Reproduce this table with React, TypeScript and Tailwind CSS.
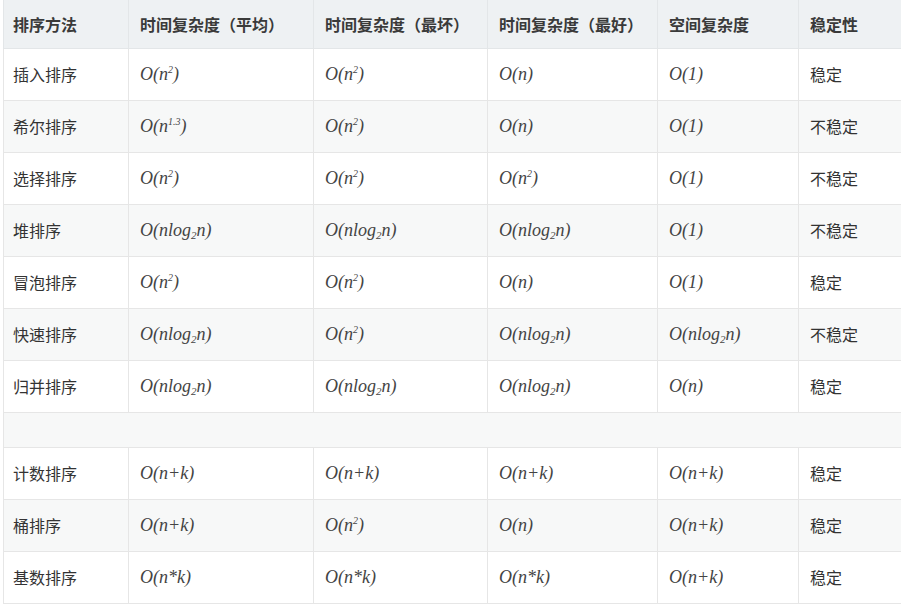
import React from 'react';

type Cell = React.ReactNode;

const cjk = '"Noto Sans CJK SC", "Noto Sans", sans-serif';

function F({ children }: { children: React.ReactNode }) {
  return (
    <span className="italic text-[18px] text-[#444]" style={{ fontFamily: '"Liberation Serif", serif' }}>
      {children}
    </span>
  );
}

const Sup = ({ t }: { t: string }) => <sup className="text-[10px] relative -top-[7px]">{t}</sup>;

const sq = <F>O(n<Sup t="2" />)</F>;
const n = <F>O(n)</F>;
const one = <F>O(1)</F>;
const nlog = <F>O(nlog<sub className="text-[11px] relative top-[3px]">2</sub>n)</F>;
const nk = <F>O(n+k)</F>;
const nmk = <F>O(n*k)</F>;

const headers = ['排序方法', '时间复杂度（平均）', '时间复杂度（最坏）', '时间复杂度（最好）', '空间复杂度', '稳定性'];

const rows: (Cell[] | null)[] = [
  ['插入排序', sq, sq, n, one, '稳定'],
  ['希尔排序', <F>O(n<Sup t="1.3" />)</F>, sq, n, one, '不稳定'],
  ['选择排序', sq, sq, sq, one, '不稳定'],
  ['堆排序', nlog, nlog, nlog, one, '不稳定'],
  ['冒泡排序', sq, sq, n, one, '稳定'],
  ['快速排序', nlog, sq, nlog, nlog, '不稳定'],
  ['归并排序', nlog, nlog, nlog, n, '稳定'],
  null,
  ['计数排序', nk, nk, nk, nk, '稳定'],
  ['桶排序', nk, sq, n, nk, '稳定'],
  ['基数排序', nmk, nmk, nmk, nk, '稳定'],
];

const widths = ['w-[125px]', 'w-[185px]', 'w-[174px]', 'w-[170px]', 'w-[141px]', 'w-[102px]'];

export default function App() {
  return (
    <div className="w-[922px] h-[610px] bg-white overflow-hidden pl-[3px]" style={{ fontFamily: cjk }}>
      <table className="border-collapse table-fixed w-[897px] text-[16px] text-[#333]">
        <colgroup>
          {widths.map((w, i) => (
            <col key={i} className={w} />
          ))}
        </colgroup>
        <thead>
          <tr className="h-[48px] bg-[#eef1f3]">
            {headers.map((h, i) => (
              <th
                key={i}
                className={`text-left font-bold text-[#3a3a3a] border-b border-[#e3e6e8] border-l border-l-[#e3e6e8] ${i === 0 ? 'pl-[9px]' : 'pl-[11px]'}`}
              >
                {h}
              </th>
            ))}
          </tr>
        </thead>
        <tbody>
          {rows.map((r, ri) => {
            const striped = ri % 2 === 1;
            if (!r) {
              return (
                <tr key={ri} className="h-[35px] bg-[#f7f8f8] border-b border-[#e6e6e6]">
                  <td colSpan={6} className="border-l border-[#e6e6e6]" />
                </tr>
              );
            }
            return (
              <tr key={ri} className={`h-[52px] border-b border-[#e6e6e6] ${striped ? 'bg-[#f7f8f8]' : 'bg-white'}`}>
                {r.map((c, ci) => (
                  <td
                    key={ci}
                    className={`border-l border-[#e6e6e6] whitespace-nowrap ${ci === 0 ? 'pl-[9px]' : 'pl-[11px]'}`}
                  >
                    {c}
                  </td>
                ))}
              </tr>
            );
          })}
        </tbody>
      </table>
    </div>
  );
}
